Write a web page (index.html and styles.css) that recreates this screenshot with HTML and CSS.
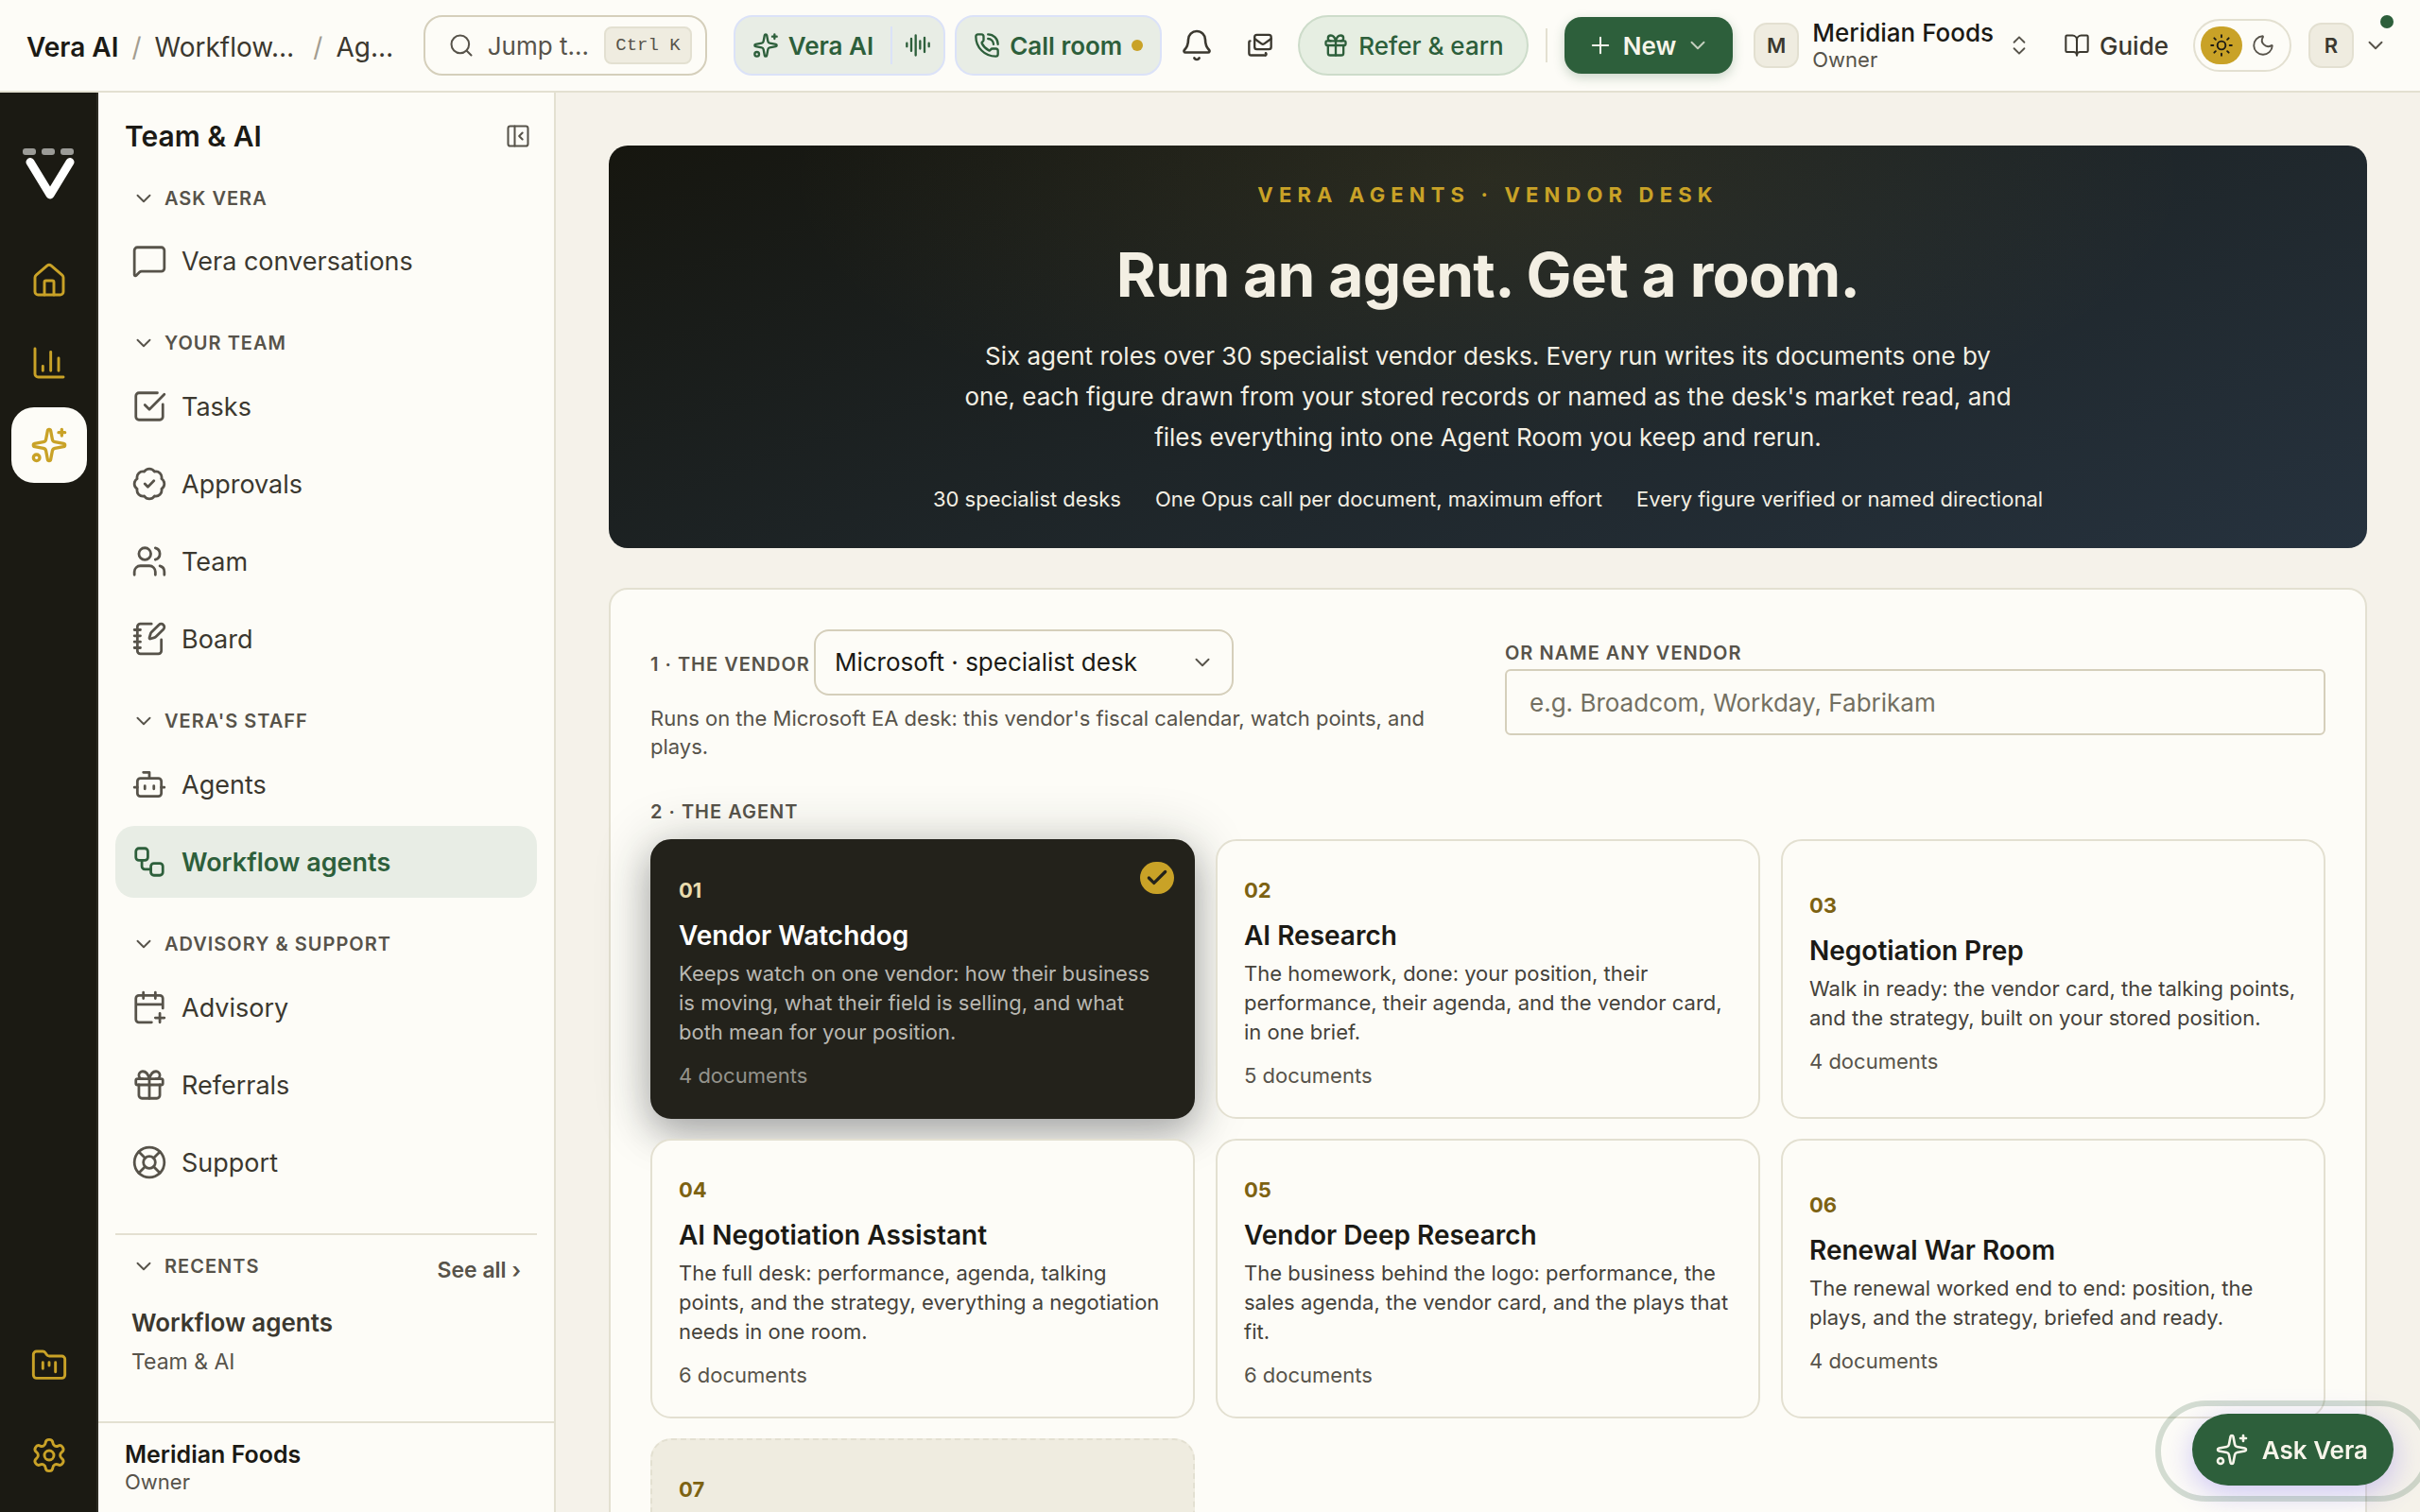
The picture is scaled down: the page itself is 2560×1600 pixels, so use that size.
FILE: index.html
```html
<!DOCTYPE html>
<html lang="en">
<head>
<meta charset="utf-8">
<title>Workflow agents · Vera AI</title>
<meta name="viewport" content="width=device-width, initial-scale=1">
<link rel="stylesheet" href="styles.css">
</head>
<body>
<svg class="sprite" aria-hidden="true">
  <symbol id="i-sparkles" viewBox="0 0 24 24"><path d="M11.017 2.814a1 1 0 0 1 1.966 0l1.051 5.558a2 2 0 0 0 1.594 1.594l5.558 1.051a1 1 0 0 1 0 1.966l-5.558 1.051a2 2 0 0 0-1.594 1.594l-1.051 5.558a1 1 0 0 1-1.966 0l-1.051-5.558a2 2 0 0 0-1.594-1.594l-5.558-1.051a1 1 0 0 1 0-1.966l5.558-1.051a2 2 0 0 0 1.594-1.594z"/><path d="M20 2v4M22 4h-4"/><circle cx="4" cy="20" r="2"/></symbol>
  <symbol id="i-search" viewBox="0 0 24 24"><circle cx="11" cy="11" r="8"/><path d="m21 21-4.3-4.3"/></symbol>
  <symbol id="i-audio" viewBox="0 0 24 24"><path d="M2 10v3M6 6v11M10 3v18M14 8v7M18 5v13M22 10v3"/></symbol>
  <symbol id="i-phone" viewBox="0 0 24 24"><path d="M13 2a9 9 0 0 1 9 9"/><path d="M13 6a5 5 0 0 1 5 5"/><path d="M13.832 16.568a1 1 0 0 0 1.213-.303l.355-.465A2 2 0 0 1 17 15h3a2 2 0 0 1 2 2v3a2 2 0 0 1-2 2A18 18 0 0 1 2 4a2 2 0 0 1 2-2h3a2 2 0 0 1 2 2v3a2 2 0 0 1-.8 1.6l-.468.351a1 1 0 0 0-.292 1.233 14 14 0 0 0 6.392 6.384"/></symbol>
  <symbol id="i-bell" viewBox="0 0 24 24"><path d="M10.268 21a2 2 0 0 0 3.464 0"/><path d="M3.262 15.326A1 1 0 0 0 4 17h16a1 1 0 0 0 .74-1.673C19.41 13.956 18 12.499 18 8A6 6 0 0 0 6 8c0 4.499-1.411 5.956-2.738 7.326"/></symbol>
  <symbol id="i-mails" viewBox="0 0 24 24"><path d="M17 19a1 1 0 0 1-1 2H4a2 2 0 0 1-2-2V9a1 1 0 0 1 1-1"/><rect x="7" y="2.5" width="15" height="13" rx="2"/><path d="m22 6-6.4 4.6a2 2 0 0 1-2.2 0L7 6"/></symbol>
  <symbol id="i-gift" viewBox="0 0 24 24"><rect x="3" y="8" width="18" height="4" rx="1"/><path d="M12 8v13"/><path d="M19 12v7a2 2 0 0 1-2 2H7a2 2 0 0 1-2-2v-7"/><path d="M7.5 8a2.5 2.5 0 0 1 0-5A4.8 8 0 0 1 12 8a4.8 8 0 0 1 4.5-5 2.5 2.5 0 0 1 0 5"/></symbol>
  <symbol id="i-plus" viewBox="0 0 24 24"><path d="M5 12h14M12 5v14"/></symbol>
  <symbol id="i-down" viewBox="0 0 24 24"><path d="m6 9 6 6 6-6"/></symbol>
  <symbol id="i-updown" viewBox="0 0 24 24"><path d="m7 15 5 5 5-5M7 9l5-5 5 5"/></symbol>
  <symbol id="i-book" viewBox="0 0 24 24"><path d="M12 7v14"/><path d="M3 18a1 1 0 0 1-1-1V4a1 1 0 0 1 1-1h5a4 4 0 0 1 4 4 4 4 0 0 1 4-4h5a1 1 0 0 1 1 1v13a1 1 0 0 1-1 1h-6a3 3 0 0 0-3 3 3 3 0 0 0-3-3z"/></symbol>
  <symbol id="i-sun" viewBox="0 0 24 24"><circle cx="12" cy="12" r="4"/><path d="M12 2v2M12 20v2M4.93 4.93l1.41 1.41M17.66 17.66l1.41 1.41M2 12h2M20 12h2M6.34 17.66l-1.41 1.41M19.07 4.93l-1.41 1.41"/></symbol>
  <symbol id="i-moon" viewBox="0 0 24 24"><path d="M20.985 12.486a9 9 0 1 1-9.473-9.472c.405-.022.617.46.402.803a6 6 0 0 0 8.268 8.268c.344-.215.825-.004.803.401"/></symbol>
  <symbol id="i-panel" viewBox="0 0 24 24"><rect x="3" y="3" width="18" height="18" rx="2"/><path d="M9 3v18M16 15l-3-3 3-3"/></symbol>
  <symbol id="i-house" viewBox="0 0 24 24"><path d="M15 21v-8a1 1 0 0 0-1-1h-4a1 1 0 0 0-1 1v8"/><path d="M3 10a2 2 0 0 1 .709-1.528l7-6a2 2 0 0 1 2.582 0l7 6A2 2 0 0 1 21 10v9a2 2 0 0 1-2 2H5a2 2 0 0 1-2-2z"/></symbol>
  <symbol id="i-chart" viewBox="0 0 24 24"><path d="M3 3v16a2 2 0 0 0 2 2h16M18 17V9M13 17V5M8 17v-3"/></symbol>
  <symbol id="i-folder" viewBox="0 0 24 24"><path d="M4 20h16a2 2 0 0 0 2-2V8a2 2 0 0 0-2-2h-7.93a2 2 0 0 1-1.66-.9l-.82-1.2A2 2 0 0 0 7.93 3H4a2 2 0 0 0-2 2v13c0 1.1.9 2 2 2Z"/><path d="M8 10v4M12 10v2M16 10v6"/></symbol>
  <symbol id="i-gear" viewBox="0 0 24 24"><path d="M9.671 4.136a2.34 2.34 0 0 1 4.659 0 2.34 2.34 0 0 0 3.319 1.915 2.34 2.34 0 0 1 2.33 4.033 2.34 2.34 0 0 0 0 3.831 2.34 2.34 0 0 1-2.33 4.033 2.34 2.34 0 0 0-3.319 1.915 2.34 2.34 0 0 1-4.659 0 2.34 2.34 0 0 0-3.32-1.915 2.34 2.34 0 0 1-2.33-4.033 2.34 2.34 0 0 0 0-3.831A2.34 2.34 0 0 1 6.35 6.051a2.34 2.34 0 0 0 3.319-1.915"/><circle cx="12" cy="12" r="3"/></symbol>
  <symbol id="i-chat" viewBox="0 0 24 24"><path d="M22 17a2 2 0 0 1-2 2H6.828a2 2 0 0 0-1.414.586l-2.202 2.202A.71.71 0 0 1 2 21.286V5a2 2 0 0 1 2-2h16a2 2 0 0 1 2 2z"/></symbol>
  <symbol id="i-task" viewBox="0 0 24 24"><path d="M21 10.656V19a2 2 0 0 1-2 2H5a2 2 0 0 1-2-2V5a2 2 0 0 1 2-2h12.344"/><path d="m9 11 3 3L22 4"/></symbol>
  <symbol id="i-badge" viewBox="0 0 24 24"><path d="M3.85 8.62a4 4 0 0 1 4.78-4.77 4 4 0 0 1 6.74 0 4 4 0 0 1 4.78 4.78 4 4 0 0 1 0 6.74 4 4 0 0 1-4.77 4.78 4 4 0 0 1-6.75 0 4 4 0 0 1-4.78-4.77 4 4 0 0 1 0-6.76Z"/><path d="m9 12 2 2 4-4"/></symbol>
  <symbol id="i-users" viewBox="0 0 24 24"><path d="M16 21v-2a4 4 0 0 0-4-4H6a4 4 0 0 0-4 4v2"/><path d="M16 3.128a4 4 0 0 1 0 7.744"/><path d="M22 21v-2a4 4 0 0 0-3-3.87"/><circle cx="9" cy="7" r="4"/></symbol>
  <symbol id="i-notebook" viewBox="0 0 24 24"><path d="M13.4 2H6a2 2 0 0 0-2 2v16a2 2 0 0 0 2 2h12a2 2 0 0 0 2-2v-7.4M2 6h4M2 10h4M2 14h4M2 18h4"/><path d="M21.378 5.626a1 1 0 1 0-3.004-3.004l-5.01 5.012a2 2 0 0 0-.506.854l-.837 2.87a.5.5 0 0 0 .62.62l2.87-.837a2 2 0 0 0 .854-.506z"/></symbol>
  <symbol id="i-bot" viewBox="0 0 24 24"><path d="M12 8V4H8"/><rect x="4" y="8" width="16" height="12" rx="2"/><path d="M2 14h2M20 14h2M15 13v2M9 13v2"/></symbol>
  <symbol id="i-workflow" viewBox="0 0 24 24"><rect x="3" y="3" width="8" height="8" rx="2"/><path d="M7 11v4a2 2 0 0 0 2 2h4"/><rect x="13" y="13" width="8" height="8" rx="2"/></symbol>
  <symbol id="i-calendar" viewBox="0 0 24 24"><path d="M16 19h6M16 2v4M19 16v6M21 12.598V6a2 2 0 0 0-2-2H5a2 2 0 0 0-2 2v14a2 2 0 0 0 2 2h8.5M3 10h18M8 2v4"/></symbol>
  <symbol id="i-buoy" viewBox="0 0 24 24"><circle cx="12" cy="12" r="10"/><path d="m4.93 4.93 4.24 4.24M14.83 9.17l4.24-4.24M14.83 14.83l4.24 4.24M9.17 14.83l-4.24 4.24"/><circle cx="12" cy="12" r="4"/></symbol>
  <symbol id="i-check" viewBox="0 0 24 24"><path d="M20 6 9 17l-5-5"/></symbol>
</svg>

<header class="topbar">
  <nav class="crumbs" aria-label="Breadcrumb">
    <a class="crumb crumb-root" href="#">Vera AI</a>
    <span class="slash">/</span>
    <a class="crumb crumb-mid" href="#">Workflow…</a>
    <span class="slash">/</span>
    <a class="crumb" href="#">Ag…</a>
  </nav>
  <button class="search" type="button">
    <svg class="icon icon-28"><use href="#i-search"/></svg>
    <span class="search-text">Jump t…</span>
    <kbd>Ctrl K</kbd>
  </button>
  <div class="actions">
    <div class="tint-group">
      <button class="tint-main" type="button"><svg class="icon icon-28"><use href="#i-sparkles"/></svg>Vera AI</button>
      <button class="tint-side" type="button" aria-label="Voice"><svg class="icon icon-28"><use href="#i-audio"/></svg></button>
    </div>
    <button class="tint-group call" type="button"><svg class="icon icon-28"><use href="#i-phone"/></svg>Call room<span class="amber-dot"></span></button>
    <button class="icon-btn" type="button" aria-label="Notifications"><svg class="icon icon-36"><use href="#i-bell"/></svg></button>
    <button class="icon-btn mail" type="button" aria-label="Messages"><svg class="icon icon-28"><use href="#i-mails"/></svg></button>
    <button class="refer" type="button"><svg class="icon icon-28"><use href="#i-gift"/></svg>Refer &amp; earn</button>
    <span class="divider"></span>
    <button class="new-btn" type="button"><svg class="icon icon-28"><use href="#i-plus"/></svg>New<svg class="icon icon-26 dim"><use href="#i-down"/></svg></button>
    <button class="org" type="button">
      <span class="avatar">M</span>
      <span class="org-text"><span class="org-name">Meridian Foods</span><span class="org-role">Owner</span></span>
      <svg class="icon icon-26"><use href="#i-updown"/></svg>
    </button>
    <a class="guide" href="#"><svg class="icon icon-28"><use href="#i-book"/></svg>Guide</a>
    <div class="theme">
      <button class="theme-opt on" type="button" aria-label="Light"><svg class="icon icon-26"><use href="#i-sun"/></svg></button>
      <button class="theme-opt" type="button" aria-label="Dark"><svg class="icon icon-26"><use href="#i-moon"/></svg></button>
    </div>
    <button class="user" type="button" aria-label="Account"><span class="avatar">R</span><svg class="icon icon-26"><use href="#i-down"/></svg><span class="online"></span></button>
  </div>
</header>

<div class="shell">
  <nav class="rail" aria-label="Areas">
    <svg class="logo" viewBox="0 0 56 56"><g fill="#9b9b97"><rect x="0" y="1" width="14" height="7" rx="3"/><rect x="20" y="1" width="14" height="7" rx="3"/><rect x="40" y="1" width="14" height="7" rx="3"/></g><path d="M8 15.500 29 50 50 15.500" fill="none" stroke="#fff" stroke-width="9" stroke-linecap="round" stroke-linejoin="round"/></svg>
    <a class="rail-btn" href="#" aria-label="Home"><svg class="icon icon-40"><use href="#i-house"/></svg></a>
    <a class="rail-btn" href="#" aria-label="Reports"><svg class="icon icon-40"><use href="#i-chart"/></svg></a>
    <a class="rail-btn active" href="#" aria-label="Team and AI"><svg class="icon icon-40"><use href="#i-sparkles"/></svg></a>
    <div class="rail-foot">
      <a class="rail-btn" href="#" aria-label="Projects"><svg class="icon icon-40"><use href="#i-folder"/></svg></a>
      <a class="rail-btn" href="#" aria-label="Settings"><svg class="icon icon-40"><use href="#i-gear"/></svg></a>
    </div>
  </nav>

  <aside class="sidebar">
    <div class="side-head">
      <h2>Team &amp; AI</h2>
      <button class="plain" type="button" aria-label="Collapse"><svg class="icon icon-28"><use href="#i-panel"/></svg></button>
    </div>
    <div class="side-body">
      <section class="group">
        <button class="group-head" type="button"><svg class="icon icon-26"><use href="#i-down"/></svg>ASK VERA</button>
        <a class="item" href="#"><svg class="icon icon-38"><use href="#i-chat"/></svg>Vera conversations</a>
      </section>
      <section class="group">
        <button class="group-head" type="button"><svg class="icon icon-26"><use href="#i-down"/></svg>YOUR TEAM</button>
        <a class="item" href="#"><svg class="icon icon-38"><use href="#i-task"/></svg>Tasks</a>
        <a class="item" href="#"><svg class="icon icon-38"><use href="#i-badge"/></svg>Approvals</a>
        <a class="item" href="#"><svg class="icon icon-38"><use href="#i-users"/></svg>Team</a>
        <a class="item" href="#"><svg class="icon icon-38"><use href="#i-notebook"/></svg>Board</a>
      </section>
      <section class="group">
        <button class="group-head" type="button"><svg class="icon icon-26"><use href="#i-down"/></svg>VERA'S STAFF</button>
        <a class="item" href="#"><svg class="icon icon-38"><use href="#i-bot"/></svg>Agents</a>
        <a class="item current" href="#"><svg class="icon icon-38"><use href="#i-workflow"/></svg>Workflow agents</a>
      </section>
      <section class="group">
        <button class="group-head" type="button"><svg class="icon icon-26"><use href="#i-down"/></svg>ADVISORY &amp; SUPPORT</button>
        <a class="item" href="#"><svg class="icon icon-38"><use href="#i-calendar"/></svg>Advisory</a>
        <a class="item" href="#"><svg class="icon icon-38"><use href="#i-gift"/></svg>Referrals</a>
        <a class="item" href="#"><svg class="icon icon-38"><use href="#i-buoy"/></svg>Support</a>
      </section>
      <section class="recents">
        <div class="recents-head">
          <button class="group-head" type="button"><svg class="icon icon-26"><use href="#i-down"/></svg>RECENTS</button>
          <a class="see-all" href="#">See all ›</a>
        </div>
        <a class="recent" href="#"><span class="recent-title">Workflow agents</span><span class="recent-sub">Team &amp; AI</span></a>
      </section>
    </div>
    <footer class="side-foot"><strong>Meridian Foods</strong><span>Owner</span></footer>
  </aside>

  <main class="main">
    <section class="hero">
      <p class="eyebrow">VERA AGENTS · VENDOR DESK</p>
      <h1>Run an agent. Get a room.</h1>
      <p class="lead">Six agent roles over 30 specialist vendor desks. Every run writes its documents one by one, each figure drawn from your stored records or named as the desk's market read, and files everything into one Agent Room you keep and rerun.</p>
      <ul class="facts"><li>30 specialist desks</li><li>One Opus call per document, maximum effort</li><li>Every figure verified or named directional</li></ul>
    </section>

    <form class="panel">
      <div class="fields">
        <div>
          <div class="vendor-row">
            <label class="label" for="vendor">1 · THE VENDOR</label>
            <span class="select-wrap"><select id="vendor"><option>Microsoft · specialist desk</option></select><svg class="icon icon-26"><use href="#i-down"/></svg></span>
          </div>
          <p class="hint">Runs on the Microsoft EA desk: this vendor's fiscal calendar, watch points, and plays.</p>
        </div>
        <div class="other">
          <label class="label" for="other">OR NAME ANY VENDOR</label>
          <input id="other" type="text" placeholder="e.g. Broadcom, Workday, Fabrikam">
        </div>
      </div>
      <p class="label step">2 · THE AGENT</p>
      <div class="cards">
        <button class="card selected" type="button">
          <span class="tick"><svg class="icon icon-26"><use href="#i-check"/></svg></span>
          <span class="num">01</span><span class="name">Vendor Watchdog</span>
          <span class="desc">Keeps watch on one vendor: how their business is moving, what their field is selling, and what both mean for your position.</span>
          <span class="docs">4 documents</span>
        </button>
        <button class="card" type="button">
          <span class="num">02</span><span class="name">AI Research</span>
          <span class="desc">The homework, done: your position, their performance, their agenda, and the vendor card, in one brief.</span>
          <span class="docs">5 documents</span>
        </button>
        <button class="card" type="button">
          <span class="num">03</span><span class="name">Negotiation Prep</span>
          <span class="desc">Walk in ready: the vendor card, the talking points, and the strategy, built on your stored position.</span>
          <span class="docs">4 documents</span>
        </button>
        <button class="card" type="button">
          <span class="num">04</span><span class="name">AI Negotiation Assistant</span>
          <span class="desc">The full desk: performance, agenda, talking points, and the strategy, everything a negotiation needs in one room.</span>
          <span class="docs">6 documents</span>
        </button>
        <button class="card" type="button">
          <span class="num">05</span><span class="name">Vendor Deep Research</span>
          <span class="desc">The business behind the logo: performance, the sales agenda, the vendor card, and the plays that fit.</span>
          <span class="docs">6 documents</span>
        </button>
        <button class="card" type="button">
          <span class="num">06</span><span class="name">Renewal War Room</span>
          <span class="desc">The renewal worked end to end: position, the plays, and the strategy, briefed and ready.</span>
          <span class="docs">4 documents</span>
        </button>
        <div class="card upcoming"><span class="num">07</span></div>
      </div>
    </form>
  </main>
</div>

<button class="ask" type="button"><svg class="icon icon-36"><use href="#i-sparkles"/></svg>Ask Vera</button>
</body>
</html>
```
FILE: styles.css
```css
:root {
  --paper: #fdfcf7;
  --ground: #f5f2ea;
  --sand: #efece0;
  --line: #e3e0d1;
  --line-strong: #d5cfbb;
  --ink: #1b1a15;
  --ink-2: #3b382f;
  --muted: #57534a;
  --green: #2d5f3b;
  --green-tint: #e8ede5;
  --gold: #c9a227;
  --night: #1b1a13;
}

* { box-sizing: border-box; }

body {
  margin: 0;
  height: 100vh;
  display: flex;
  flex-direction: column;
  overflow: hidden;
  font-family: Inter, "Liberation Sans", sans-serif;
  font-size: 26px;
  color: var(--ink);
  background: var(--ground);
}

h1, h2, p, ul { margin: 0; padding: 0; }
ul { list-style: none; }
a { color: inherit; text-decoration: none; }
button {
  margin: 0;
  padding: 0;
  border: 0;
  background: none;
  font: inherit;
  color: inherit;
  text-align: left;
}

.sprite { display: none; }
.icon {
  flex: none;
  fill: none;
  stroke: currentColor;
  stroke-width: 1.75;
  stroke-linecap: round;
  stroke-linejoin: round;
}
.icon-26 { width: 26px; height: 26px; }
.icon-28 { width: 28px; height: 28px; }
.icon-36 { width: 36px; height: 36px; }
.icon-38 { width: 38px; height: 38px; }
.icon-40 { width: 40px; height: 40px; }

/* Top bar */
.topbar {
  flex: none;
  display: flex;
  align-items: center;
  height: 98px;
  padding: 0 26px 0 28px;
  background: var(--paper);
  border-bottom: 2px solid var(--line);
}
.crumbs {
  flex: 1;
  min-width: 0;
  display: flex;
  align-items: center;
  gap: 14px;
  font-size: 28px;
  line-height: 36px;
  padding-top: 4px;
  color: var(--ink-2);
}
.crumb-root { font-weight: 600; color: var(--ink); }
.crumb-mid { padding-right: 6px; }
.slash { color: #a39d90; }

.search {
  flex: none;
  display: flex;
  align-items: center;
  gap: 14px;
  width: 300px;
  height: 64px;
  margin-right: 28px;
  padding: 0 14px 0 24px;
  border: 2px solid var(--line-strong);
  border-radius: 20px;
  color: var(--muted);
}
.search-text { flex: 1; }
kbd {
  height: 40px;
  padding: 0 10px;
  border: 2px solid var(--line);
  border-radius: 8px;
  background: var(--sand);
  font: 19px/36px "Liberation Mono", monospace;
}

.actions { flex: none; display: flex; align-items: center; gap: 10px; font-weight: 500; }
.tint-group {
  display: flex;
  align-items: center;
  height: 64px;
  border: 2px solid #dbe2f8;
  border-radius: 20px;
  background: var(--green-tint);
  color: var(--green);
  font-weight: 600;
}
.tint-main { display: flex; align-items: center; gap: 10px; padding: 0 18px; }
.tint-side {
  display: flex;
  align-items: center;
  height: 40px;
  padding: 0 13px;
  border-left: 2px solid #dbe2f8;
}
.call { gap: 10px; padding: 0 18px; }
.amber-dot { width: 12px; height: 12px; border-radius: 50%; background: var(--gold); }
.icon-btn {
  display: grid;
  place-items: center;
  width: 54px;
  height: 60px;
  color: var(--ink-2);
}
.icon-btn.mail { width: 60px; }
.refer {
  display: flex;
  align-items: center;
  gap: 10px;
  height: 64px;
  padding: 0 24px;
  border: 2px solid #cddcca;
  border-radius: 32px;
  background: #e6eee2;
  color: var(--green);
}
.tint-group .icon, .refer .icon, .icon-btn.mail .icon { stroke-width: 2; }
.divider { width: 2px; height: 36px; margin: 0 8px; background: var(--line); }
.new-btn {
  display: flex;
  align-items: center;
  gap: 10px;
  height: 60px;
  padding: 0 24px;
  border-radius: 18px;
  background: var(--green);
  color: #f7f5ea;
  font-weight: 600;
  box-shadow: 0 4px 12px rgba(45, 95, 59, .25);
}
.dim { opacity: .75; }
.org { display: flex; align-items: center; padding: 0 12px; color: var(--muted); }
.avatar {
  display: grid;
  place-items: center;
  width: 48px;
  height: 48px;
  border: 2px solid var(--line);
  border-radius: 14px;
  background: var(--sand);
  color: var(--ink-2);
  font-size: 22px;
  font-weight: 600;
}
.org-text { display: flex; flex-direction: column; margin: 0 14px; font-weight: 400; }
.org-name { font-weight: 500; line-height: 30px; color: var(--ink); }
.org-role { font-size: 22px; line-height: 26px; }
.guide { display: flex; align-items: center; gap: 10px; padding: 0 16px 0 12px; color: var(--ink-2); }
.theme {
  display: flex;
  align-items: center;
  height: 56px;
  padding: 0 6px;
  border: 2px solid var(--line);
  border-radius: 28px;
}
.theme-opt {
  display: grid;
  place-items: center;
  width: 44px;
  height: 40px;
  border-radius: 20px;
  color: var(--muted);
}
.theme-opt.on { background: var(--gold); color: var(--ink); }
.user { position: relative; display: flex; align-items: center; gap: 10px; padding: 0 8px; color: var(--muted); }
.online {
  position: absolute;
  top: -8px;
  right: 2px;
  width: 14px;
  height: 14px;
  border-radius: 50%;
  background: var(--green);
}

/* Shell */
.shell { flex: 1; min-height: 0; display: flex; }

.rail {
  flex: none;
  display: flex;
  flex-direction: column;
  align-items: center;
  gap: 7px;
  width: 104px;
  padding: 58px 0 20px 2px;
  background: var(--night);
  border-right: 2px solid #2c2b24;
}
.logo { width: 56px; height: 56px; margin-bottom: 38px; flex: none; }
.rail-btn {
  display: grid;
  place-items: center;
  width: 80px;
  height: 80px;
  border-radius: 24px;
  color: var(--gold);
}
.rail-btn.active { background: var(--paper); }
.rail-btn.active .icon { stroke-width: 2; }
.rail-foot { display: flex; flex-direction: column; gap: 15px; margin-top: auto; }

.sidebar {
  flex: none;
  display: flex;
  flex-direction: column;
  width: 484px;
  background: var(--paper);
  border-right: 2px solid var(--line);
}
.side-head {
  display: flex;
  align-items: center;
  justify-content: space-between;
  padding: 28px 24px 36px 28px;
}
.side-head h2 { font-size: 30px; line-height: 36px; font-weight: 600; }
.plain { display: flex; color: var(--muted); }
.side-body { flex: 1; min-height: 0; padding: 0 18px; }
.group { display: flex; flex-direction: column; gap: 6px; margin-bottom: 37px; }
.group-head {
  display: flex;
  align-items: center;
  gap: 9px;
  margin-bottom: 10px;
  padding-left: 17px;
  font-size: 20px;
  line-height: 24px;
  height: 24px;
  font-weight: 600;
  letter-spacing: .05em;
  color: var(--muted);
}
.group + .group .group-head { margin-bottom: 11px; }
.item {
  display: flex;
  align-items: center;
  gap: 15px;
  height: 76px;
  padding: 0 17px;
  border-radius: 20px;
  font-size: 27px;
  color: var(--ink-2);
}
.item .icon { color: var(--muted); }
.item.current { background: var(--green-tint); color: var(--green); font-weight: 600; }
.item.current .icon { color: var(--green); }

.recents { border-top: 2px solid var(--line); padding-top: 21px; }
.recents-head { display: flex; justify-content: space-between; padding-right: 17px; }
.see-all { padding-top: 2px; font-size: 23px; line-height: 28px; font-weight: 600; color: var(--muted); }
.recent { display: flex; flex-direction: column; gap: 9px; padding: 22px 17px 0; }
.recent-title { line-height: 32px; font-weight: 600; color: var(--ink-2); }
.recent-sub { font-size: 23px; line-height: 32px; color: var(--muted); }
.side-foot {
  display: flex;
  flex-direction: column;
  padding: 18px 28px;
  border-top: 2px solid var(--line);
  font-size: 22px;
  line-height: 28px;
  color: var(--muted);
}
.side-foot strong { font-size: 25px; line-height: 30px; font-weight: 600; color: var(--ink); }

/* Main */
.main { flex: 1; min-width: 0; overflow: hidden; padding: 56px; }

.hero {
  display: flex;
  flex-direction: column;
  align-items: center;
  padding: 38px 40px 37px;
  border-radius: 20px;
  background:
    radial-gradient(ellipse 40% 70% at 50% 8%, rgba(201, 162, 39, .09), transparent),
    linear-gradient(160deg, #16160f, #1e2528 50%, #26323e);
  color: #f3efe3;
  text-align: center;
}
.eyebrow { font-size: 22px; line-height: 28px; font-weight: 700; letter-spacing: .28em; color: var(--gold); }
.hero h1 { margin: 35px 0 28px; font-size: 64px; line-height: 72px; font-weight: 700; letter-spacing: -.01em; }
.lead { max-width: 1112px; line-height: 43px; }
.facts { display: flex; gap: 36px; margin-top: 29px; font-size: 22px; line-height: 30px; }

.panel {
  margin-top: 42px;
  padding: 42px;
  border: 2px solid var(--line);
  border-radius: 20px;
  background: var(--paper);
}
.fields { display: grid; grid-template-columns: 1fr 1fr; gap: 36px; }
.label {
  font-size: 20px;
  line-height: 24px;
  font-weight: 600;
  letter-spacing: .05em;
  color: var(--muted);
}
.vendor-row { display: flex; align-items: baseline; gap: 4px; }
.vendor-row .label { white-space: nowrap; }
.select-wrap { display: grid; align-items: center; width: 444px; }
.select-wrap > * { grid-area: 1 / 1; }
.select-wrap .icon { justify-self: end; margin-right: 20px; color: var(--muted); pointer-events: none; }
select, input {
  width: 100%;
  height: 70px;
  margin: 0;
  border: 2px solid var(--line-strong);
  background: var(--paper);
  font: inherit;
  color: var(--ink);
}
select { appearance: none; padding: 0 60px 2px 20px; border-radius: 16px; }
input { padding: 0 24px; border-radius: 6px; }
input::placeholder { color: #737062; opacity: 1; }
.hint { margin-top: 9px; font-size: 22px; line-height: 30px; color: var(--muted); }
.other { display: flex; flex-direction: column; gap: 5px; padding-top: 13px; }
.step { margin: 42px 0 17px; }

.cards { display: grid; grid-template-columns: repeat(3, 1fr); gap: 21px 22px; }
.card {
  position: relative;
  display: flex;
  flex-direction: column;
  justify-content: center;
  min-height: 296px;
  padding: 37px 28px 28px;
  border: 2px solid var(--line);
  border-radius: 22px;
  background: var(--paper);
  font-size: 22px;
  line-height: 31px;
}
.num { font-weight: 700; color: #7d6212; }
.name { margin: 14px 0 7px; font-size: 28px; line-height: 36px; font-weight: 600; color: var(--ink); }
.desc { color: #45423a; }
.docs { margin-top: 15px; color: var(--muted); }
.card.selected {
  border-color: #23221b;
  background: #23221b;
  box-shadow: 0 16px 36px rgba(30, 32, 45, .26), 0 4px 60px rgba(30, 40, 35, .24);
}
.selected .num { color: #e9dcae; }
.selected .name { color: #fff; }
.selected .desc { color: #b9b8b2; }
.selected .docs { color: #94938c; }
.tick {
  position: absolute;
  top: 22px;
  right: 20px;
  display: grid;
  place-items: center;
  width: 36px;
  height: 34px;
  border-radius: 18px;
  background: var(--gold);
  color: #23221b;
}
.tick .icon { stroke-width: 3; }
.card.upcoming { justify-content: flex-start; border-style: dashed; background: var(--sand); }

.ask {
  position: fixed;
  right: 28px;
  bottom: 28px;
  display: flex;
  align-items: center;
  gap: 14px;
  height: 76px;
  padding: 0 27px 0 24px;
  border-radius: 38px;
  background: var(--green);
  color: #f7f5ea;
  font-weight: 600;
  box-shadow: 0 8px 32px rgba(100, 80, 240, .32);
}
.ask::before {
  content: "";
  position: absolute;
  inset: -14px -39px -17px;
  border: 6px solid rgba(45, 95, 59, .2);
  border-radius: 54px;
}
```
